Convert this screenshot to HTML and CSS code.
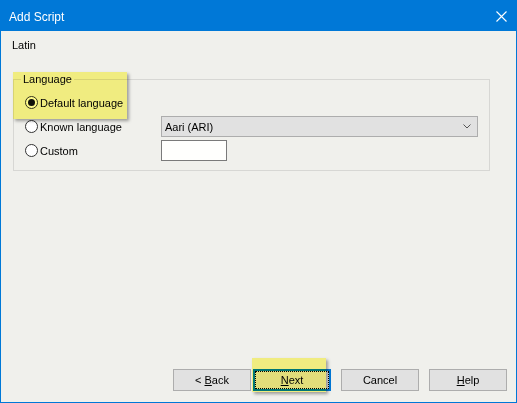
FILE: index.html
```html
<!DOCTYPE html>
<html>
<head>
<meta charset="utf-8">
<link rel="stylesheet" href="styles.css">
</head>
<body>
<div class="window">
  <div class="titlebar">
    <span class="title">Add Script</span>
    <svg class="close" width="11" height="11" viewBox="0 0 11 11"><path d="M0.5 0.5 L10.5 10.5 M10.5 0.5 L0.5 10.5" stroke="#fff" stroke-width="1.1" fill="none"/></svg>
  </div>
  <div class="content">
    <div class="script-name">Latin</div>
    <fieldset class="group">
      <legend>Language</legend>
      <div class="grid">
        <label class="radio-row"><span class="radio checked"></span><span>Default language</span></label>
        <span></span>
        <label class="radio-row"><span class="radio"></span><span>Known language</span></label>
        <div class="combo"><span>Aari (ARI)</span><svg width="8" height="5" viewBox="0 0 8 5"><path d="M0.5 0.5 L4 4 L7.5 0.5" stroke="#555" fill="none"/></svg></div>
        <label class="radio-row"><span class="radio"></span><span>Custom</span></label>
        <div class="textbox"></div>
      </div>
    </fieldset>
    <div class="spacer"></div>
    <div class="buttons">
      <button class="btn">&lt; <u>B</u>ack</button>
      <button class="btn default"><u>N</u>ext</button>
      <button class="btn gap">Cancel</button>
      <button class="btn gap"><u>H</u>elp</button>
    </div>
  </div>
  <div class="highlight hl-lang"></div>
  <div class="highlight hl-next"></div>
</div>
</body>
</html>
```

FILE: styles.css
```css
* { box-sizing: border-box; }
html, body { margin: 0; padding: 0; }
body {
  font-family: "Liberation Sans", Arial, sans-serif;
  font-size: 11px;
  color: #000;
  background: #f0f0ec;
}
.window {
  position: relative;
  width: 517px;
  height: 403px;
  border: 1px solid #0078d7;
  display: flex;
  flex-direction: column;
  background: #f0f0ec;
}
.titlebar {
  height: 30px;
  background: #0078d7;
  display: flex;
  align-items: center;
  justify-content: space-between;
  padding: 0 9px 0 8px;
  color: #fff;
}
.title {
  font-size: 12px;
  line-height: 14px;
  padding-top: 1px;
}
.close { display: block; }
.content {
  flex: 1;
  display: flex;
  flex-direction: column;
  padding: 8px 9px 11px 11px;
}
.script-name {
  line-height: 13px;
}
.group {
  margin: 21px 17px 0 1px;
  padding: 6px 0 9px 12px;
  border: 1px solid #d7d7d4;
  min-width: 0;
}
.group legend {
  line-height: 13px;
  padding: 0 2px;
  margin-left: -5px;
}
.grid {
  display: grid;
  grid-template-columns: 135px 317px;
  grid-auto-rows: 21px;
  row-gap: 3px;
}
.radio-row {
  display: flex;
  align-items: center;
  gap: 2px;
  margin-left: -1px;
}
.radio {
  width: 13px;
  height: 13px;
  border: 1px solid #333;
  border-radius: 50%;
  background: #fff;
  display: flex;
  align-items: center;
  justify-content: center;
  flex: none;
}
.radio.checked::after {
  content: "";
  width: 7px;
  height: 7px;
  border-radius: 50%;
  background: #111;
}
.combo {
  border: 1px solid #adadad;
  background: #e1e1e1;
  display: flex;
  align-items: center;
  justify-content: space-between;
  padding: 0 6px 0 3px;
}
.textbox {
  width: 66px;
  border: 1px solid #7a7a7a;
  background: #fffffd;
}
.spacer { flex: 1; }
.buttons {
  display: flex;
  justify-content: flex-end;
  gap: 2px;
}
.btn {
  width: 78px;
  height: 22px;
  font-family: "Liberation Sans", Arial, sans-serif;
  font-size: 11px;
  color: #000;
  background: #e1e1e1;
  border: 1px solid #adadad;
  padding: 0;
  margin: 0;
}
.btn.gap { margin-left: 8px; }
.btn.default {
  border: 2px solid #0078d7;
  outline: 1px dotted #000;
  outline-offset: -3px;
}
.highlight {
  position: absolute;
  background: #fffb8a;
  mix-blend-mode: multiply;
  box-shadow: 2px 2px 3px rgba(0, 0, 0, 0.35);
}
.hl-lang { left: 12px; top: 71px; width: 114px; height: 47px; }
.hl-next { left: 251px; top: 357px; width: 74px; height: 34px; }
```
